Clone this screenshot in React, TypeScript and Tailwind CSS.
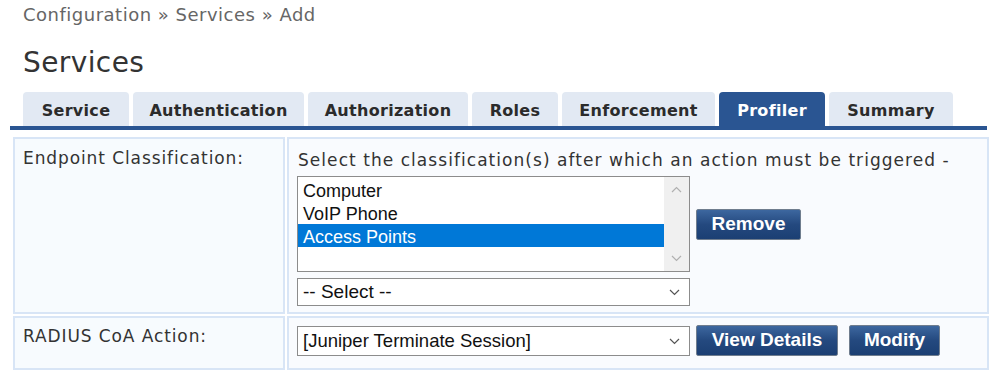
import React from 'react';

type Tab = { label: string; width: string; active?: boolean };

const tabs: Tab[] = [
  { label: 'Service', width: 'w-[106px]' },
  { label: 'Authentication', width: 'w-[171px]' },
  { label: 'Authorization', width: 'w-[160px]' },
  { label: 'Roles', width: 'w-[86px]' },
  { label: 'Enforcement', width: 'w-[153px]' },
  { label: 'Profiler', width: 'w-[106px]', active: true },
  { label: 'Summary', width: 'w-[124px]' },
];

const classifications = ['Computer', 'VoIP Phone', 'Access Points'];

const Chevron: React.FC<{ up?: boolean; className?: string }> = ({ up, className }) => (
  <svg width="11" height="7" viewBox="0 0 11 7" className={className}>
    <path
      d={up ? 'M1 6 L5.5 1.5 L10 6' : 'M1 1 L5.5 5.5 L10 1'}
      fill="none"
      stroke="currentColor"
      strokeWidth="1.2"
    />
  </svg>
);

const Button: React.FC<{ label: string; width: string }> = ({ label, width }) => (
  <button
    className={`${width} h-[31px] flex items-center justify-center rounded-[2px] border border-[#6f7d8e] bg-gradient-to-b from-[#3d679f] via-[#24497f] to-[#1b3f73] text-white font-bold text-[19px] font-['Liberation_Sans',Arial,sans-serif]`}
  >
    {label}
  </button>
);

const App: React.FC = () => {
  return (
    <div className="w-[1002px] h-[381px] overflow-hidden bg-white font-['DejaVu_Sans',Verdana,sans-serif] text-[#333]">
      <div className="pl-[23px] pt-[4px] text-[18px] leading-[22px] tracking-[0.5px] text-[#666]">
        Configuration » Services » Add
      </div>
      <h1 className="pl-[23px] mt-[21px] text-[28px] leading-[32px] tracking-[0.4px] text-[#333]">Services</h1>

      <div className="ml-[10px] mt-[13px] w-[977px] flex gap-[4px] pl-[13px] border-b-4 border-[#2a5592]">
        {tabs.map((tab) => (
          <div
            key={tab.label}
            className={`${tab.width} h-[34px] pt-[3px] flex items-center justify-center rounded-t-[4px] text-[16px] tracking-[0.3px] font-bold ${
              tab.active ? 'bg-[#2a5592] text-white' : 'bg-[#e2e9f3] text-[#2b2b2b]'
            }`}
          >
            {tab.label}
          </div>
        ))}
      </div>

      <div className="ml-[13px] mt-[7px] w-[976px] flex flex-col gap-[2px]">
        <div className="flex gap-[2px] h-[177px]">
          <div className="w-[272px] border-2 border-[#d8e5f6] bg-[#f7fbfe] pl-[8px] pt-[9px] text-[17px] leading-[20px] tracking-[0.9px]">
            Endpoint Classification:
          </div>
          <div className="flex-1 border-2 border-[#d8e5f6] bg-[#f9fbfe] pl-[8px] pt-[11px]">
            <div className="pl-[1px] text-[17px] leading-[20px] tracking-[1.05px]">
              Select the classification(s) after which an action must be triggered -
            </div>
            <div className="mt-[6px] flex items-center gap-[6px]">
              <div className="w-[393px] h-[96px] border border-[#8c8c8c] bg-white flex">
                <div className="flex-1 pt-[1px] font-['Liberation_Sans',Arial,sans-serif] text-[18px] leading-[23px] text-[#111]">
                  {classifications.map((item) => (
                    <div
                      key={item}
                      className={`pl-[5px] pt-[2px] h-[23px] ${
                        item === 'Access Points' ? 'bg-[#0078d7] text-white' : ''
                      }`}
                    >
                      {item}
                    </div>
                  ))}
                </div>
                <div className="w-[25px] bg-[#f0f0f0] flex flex-col items-center justify-between py-[9px] text-[#b0b0b0]">
                  <Chevron up />
                  <Chevron />
                </div>
              </div>
              <Button label="Remove" width="w-[105px]" />
            </div>
            <div className="mt-[6px] w-[393px] h-[28px] border border-[#8c8c8c] bg-white flex items-center justify-between pl-[5px] pr-[9px] font-['Liberation_Sans',Arial,sans-serif] text-[19px] text-[#111]">
              <span>-- Select --</span>
              <Chevron className="text-[#555]" />
            </div>
          </div>
        </div>

        <div className="flex gap-[2px] h-[54px]">
          <div className="w-[272px] border-2 border-[#d8e5f6] bg-[#f7fbfe] pl-[8px] pt-[8px] text-[17px] leading-[20px] tracking-[0.9px]">
            RADIUS CoA Action:
          </div>
          <div className="flex-1 border-2 border-[#d8e5f6] bg-[#f9fbfe] pl-[8px] pt-[8px] flex items-start">
            <div className="w-[393px] h-[30px] border border-[#8c8c8c] bg-white flex items-center justify-between pl-[5px] pr-[9px] font-['Liberation_Sans',Arial,sans-serif] text-[18.5px] text-[#111]">
              <span>[Juniper Terminate Session]</span>
              <Chevron className="text-[#555]" />
            </div>
            <div className="ml-[6px] -mt-[1px] flex gap-[11px]">
              <Button label="View Details" width="w-[142px]" />
              <Button label="Modify" width="w-[91px]" />
            </div>
          </div>
        </div>
      </div>
    </div>
  );
};

export default App;
